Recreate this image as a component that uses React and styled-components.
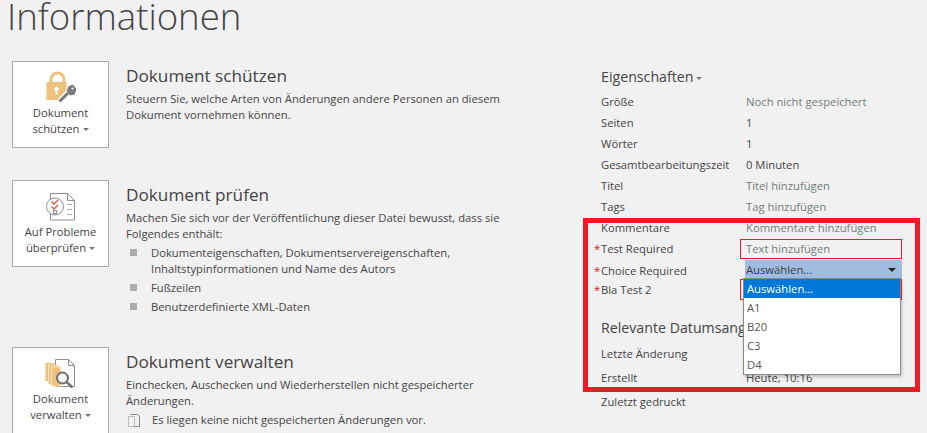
import React from 'react';
import styled, { createGlobalStyle } from 'styled-components';

const Global = createGlobalStyle`
  html, body {
    margin: 0;
    padding: 0;
    background: #f1f1f1;
  }
`;

const Page = styled.div`
  position: relative;
  width: 927px;
  height: 433px;
  overflow: hidden;
  background: #f1f1f1;
  color: #444;
  font-family: "Open Sans", "Liberation Sans", sans-serif;
  font-size: 11.25px;
`;

const Title = styled.h1`
  margin: 0;
  padding: 0 0 0 7px;
  height: 61px;
  font-size: 36.6px;
  line-height: 32px;
  font-weight: 300;
  color: #444;
`;

const Columns = styled.div`
  display: grid;
  grid-template-columns: 601px 1fr;
`;

const Left = styled.div`
  padding-left: 12px;
`;

const Block = styled.section`
  display: flex;
  gap: 17px;
  height: ${(p) => p.$height}px;
`;

const BigButton = styled.div`
  box-sizing: border-box;
  flex: none;
  width: 97px;
  height: 87px;
  background: #fff;
  border: 1px solid #ababab;
  display: flex;
  flex-direction: column;
  align-items: center;
  padding-top: 8px;
  text-align: center;
  line-height: 16px;
  color: #444;
  svg {
    display: block;
    margin-bottom: 3px;
  }
`;

const Caret = styled.span`
  display: inline-block;
  width: 0;
  height: 0;
  margin-left: 3px;
  vertical-align: middle;
  border-left: 3px solid transparent;
  border-right: 3px solid transparent;
  border-top: 3px solid #777;
`;

const BlockBody = styled.div`
  padding-top: 3px;
`;

const BlockTitle = styled.h2`
  margin: 0 0 3px;
  font-size: 17.2px;
  line-height: 24px;
  font-weight: 400;
  color: #444;
`;

const Para = styled.p`
  margin: 0;
  line-height: 16px;
  width: ${(p) => p.$width || 400}px;
`;

const Bullets = styled.ul`
  list-style: none;
  margin: 3px 0 0;
  padding: 0;
`;

const Bullet = styled.li`
  position: relative;
  padding-left: 25px;
  margin-bottom: 3px;
  line-height: 16px;
  width: 340px;
  &::before {
    content: '';
    position: absolute;
    left: 4px;
    top: 4px;
    width: 7px;
    height: 7px;
    background: #ababab;
  }
`;

const Note = styled.div`
  display: flex;
  align-items: center;
  gap: 11px;
  margin-top: 3px;
  line-height: 16px;
`;

const Right = styled.div`
  padding-top: 6px;
`;

const PropsHeading = styled.h3`
  margin: 0 0 4px;
  font-size: 14.2px;
  line-height: 20px;
  font-weight: 400;
  color: #444;
`;

const Row = styled.div`
  position: relative;
  display: grid;
  grid-template-columns: 145px 1fr;
  height: ${(p) => p.$height || 21}px;
  line-height: 21px;
`;

const Value = styled.span`
  color: ${(p) => (p.$link ? '#6f7f7a' : '#444')};
`;

const Star = styled.span`
  position: absolute;
  left: -7px;
  top: 0;
  color: #e81123;
`;

const Field = styled.div`
  box-sizing: border-box;
  margin: ${(p) => p.$offset || 0}px 0 0 -6px;
  padding-left: 5px;
  width: 162px;
  height: ${(p) => p.$size || 21}px;
  line-height: 18px;
  border: 1px solid #ed1c24;
  color: #6f7f7a;
`;

const SelectBox = styled.div`
  display: flex;
  justify-content: space-between;
  align-items: center;
  width: 157px;
  height: 19px;
  margin-left: -1px;
  padding-left: 1px;
  box-sizing: border-box;
  background: #a2bce0;
  color: #3a3a3a;
`;

const SelectArrow = styled.span`
  width: 0;
  height: 0;
  margin-right: 6px;
  border-left: 4px solid transparent;
  border-right: 4px solid transparent;
  border-top: 4px solid #222;
`;

const DateHeading = styled.h3`
  margin: 18px 0 5px;
  font-size: 14.2px;
  line-height: 20px;
  font-weight: 400;
  color: #444;
`;

const Dropdown = styled.ul`
  position: absolute;
  left: 743px;
  top: 278px;
  box-sizing: border-box;
  width: 158px;
  height: 97px;
  margin: 0;
  padding: 0;
  list-style: none;
  background: #fff;
  border: 1px solid #8a8a8a;
  box-shadow: 1px 2px 3px rgba(0, 0, 0, 0.2);
`;

const Option = styled.li`
  height: 19px;
  line-height: 19px;
  padding-left: 3px;
  background: ${(p) => (p.$active ? '#0078d7' : 'transparent')};
  color: ${(p) => (p.$active ? '#fff' : '#555')};
`;

const Annotation = styled.div`
  position: absolute;
  left: 583px;
  top: 218px;
  width: 337px;
  height: 174px;
  box-sizing: border-box;
  border: 5px solid #ed1c24;
  pointer-events: none;
`;

const LockIcon = () => (
  <svg width="32" height="32" viewBox="0 0 32 32">
    <path d="M6 13V9.5a6.5 6.5 0 0 1 13 0V13" fill="none" stroke="#eec27d" strokeWidth="3" />
    <rect x="1.5" y="12" width="20" height="18" rx="1" fill="#eec27d" />
    <circle cx="11.5" cy="19" r="2.2" fill="#fff" />
    <rect x="10.7" y="19" width="1.6" height="6" fill="#fff" />
    <path d="M15 31l8-8" stroke="#fff" strokeWidth="6" />
    <path d="M23 16l5-2 4 5-2 6-5 1-4-5z" fill="#7b7b7b" stroke="#fff" />
    <path d="M14.5 31.5l8.5-8.5" stroke="#7b7b7b" strokeWidth="3" />
    <circle cx="27.5" cy="18.5" r="1" fill="#fff" />
  </svg>
);

const CheckIcon = () => (
  <svg width="32" height="32" viewBox="0 0 32 32">
    <path d="M5.5 4.5h17l7 7v19.500h-24z" fill="#fff" stroke="#8f8f8f" />
    <path d="M22.500 4.500v7h7" fill="none" stroke="#8f8f8f" />
    <path d="M22 15.500h5M22 20.500h5M22 25.500h5" stroke="#a8a8a8" />
    <circle cx="10" cy="17.500" r="8.500" fill="#fff" stroke="#8f8f8f" />
    <path d="M6.500 12.500l2.500 2.500 4-4M6.500 17.500l2.500 2.500 4-4" fill="none" stroke="#e0593c" strokeWidth="1.4" />
    <rect x="8.500" y="21.500" width="3" height="3" fill="none" stroke="#8f8f8f" />
  </svg>
);

const ManageIcon = () => (
  <svg width="32" height="32" viewBox="0 0 32 32">
    <path d="M10.500 3.500h13l6 6v21h-19z" fill="#fff" stroke="#8f8f8f" />
    <path d="M23.500 3.500v6h6" fill="none" stroke="#8f8f8f" />
    <rect x="0.500" y="7" width="9" height="18" fill="#eec27d" />
    <rect x="3.500" y="9" width="9" height="19" fill="#eec27d" stroke="#f6e3c3" />
    <rect x="6.500" y="11" width="9" height="19" fill="#eec27d" stroke="#f6e3c3" />
    <circle cx="17.500" cy="22" r="5.500" fill="#f5f5f5" stroke="#6f6f6f" strokeWidth="2" />
    <path d="M21.500 26l6 5.500" stroke="#6f6f6f" strokeWidth="2.400" />
  </svg>
);

const NoteIcon = () => (
  <svg width="15" height="15" viewBox="0 0 15 15">
    <path d="M4.500 1.500h7l2 2v10h-5" fill="none" stroke="#8a8a8a" />
    <rect x="2.500" y="3.500" width="6" height="10" fill="none" stroke="#8a8a8a" strokeDasharray="1 1" />
  </svg>
);

const props = [
  ['Größe', 'Noch nicht gespeichert', true],
  ['Seiten', '1', false],
  ['Wörter', '1', false],
  ['Gesamtbearbeitungszeit', '0 Minuten', false],
  ['Titel', 'Titel hinzufügen', true],
  ['Tags', 'Tag hinzufügen', true],
  ['Kommentare', 'Kommentare hinzufügen', true],
];

export default function App() {
  return (
    <Page>
      <Global />
      <Title>Informationen</Title>
      <Columns>
        <Left>
          <Block $height={119}>
            <BigButton>
              <LockIcon />
              <span>Dokument</span>
              <span>schützen<Caret /></span>
            </BigButton>
            <BlockBody>
              <BlockTitle>Dokument schützen</BlockTitle>
              <Para>Steuern Sie, welche Arten von Änderungen andere Personen an diesem Dokument vornehmen können.</Para>
            </BlockBody>
          </Block>
          <Block $height={167}>
            <BigButton>
              <CheckIcon />
              <span>Auf Probleme</span>
              <span>überprüfen<Caret /></span>
            </BigButton>
            <BlockBody>
              <BlockTitle>Dokument prüfen</BlockTitle>
              <Para>Machen Sie sich vor der Veröffentlichung dieser Datei bewusst, dass sie Folgendes enthält:</Para>
              <Bullets>
                <Bullet>Dokumenteigenschaften, Dokumentservereigenschaften, Inhaltstypinformationen und Name des Autors</Bullet>
                <Bullet>Fußzeilen</Bullet>
                <Bullet>Benutzerdefinierte XML-Daten</Bullet>
              </Bullets>
            </BlockBody>
          </Block>
          <Block $height={86}>
            <BigButton>
              <ManageIcon />
              <span>Dokument</span>
              <span>verwalten<Caret /></span>
            </BigButton>
            <BlockBody>
              <BlockTitle>Dokument verwalten</BlockTitle>
              <Para $width={370}>Einchecken, Auschecken und Wiederherstellen nicht gespeicherter Änderungen.</Para>
              <Note>
                <NoteIcon />
                <span>Es liegen keine nicht gespeicherten Änderungen vor.</span>
              </Note>
            </BlockBody>
          </Block>
        </Left>
        <Right>
          <PropsHeading>Eigenschaften<Caret /></PropsHeading>
          {props.map(([label, value, link]) => (
            <Row key={label}>
              <span>{label}</span>
              <Value $link={link}>{value}</Value>
            </Row>
          ))}
          <Row $height={22}>
            <Star>*</Star>
            <span>Test Required</span>
            <Field $offset={1} $size={20}>Text hinzufügen</Field>
          </Row>
          <Row $height={19}>
            <Star>*</Star>
            <span>Choice Required</span>
            <SelectBox>Auswählen...<SelectArrow /></SelectBox>
          </Row>
          <Row>
            <Star>*</Star>
            <span>Bla Test 2</span>
            <Field />
          </Row>
          <DateHeading>Relevante Datumsangaben</DateHeading>
          <Row $height={24}>
            <span>Letzte Änderung</span>
          </Row>
          <Row $height={24}>
            <span>Erstellt</span>
            <Value>Heute, 10:16</Value>
          </Row>
          <Row $height={24}>
            <span>Zuletzt gedruckt</span>
          </Row>
        </Right>
      </Columns>
      <Annotation />
      <Dropdown>
        <Option $active>Auswählen...</Option>
        <Option>A1</Option>
        <Option>B20</Option>
        <Option>C3</Option>
        <Option>D4</Option>
      </Dropdown>
    </Page>
  );
}
